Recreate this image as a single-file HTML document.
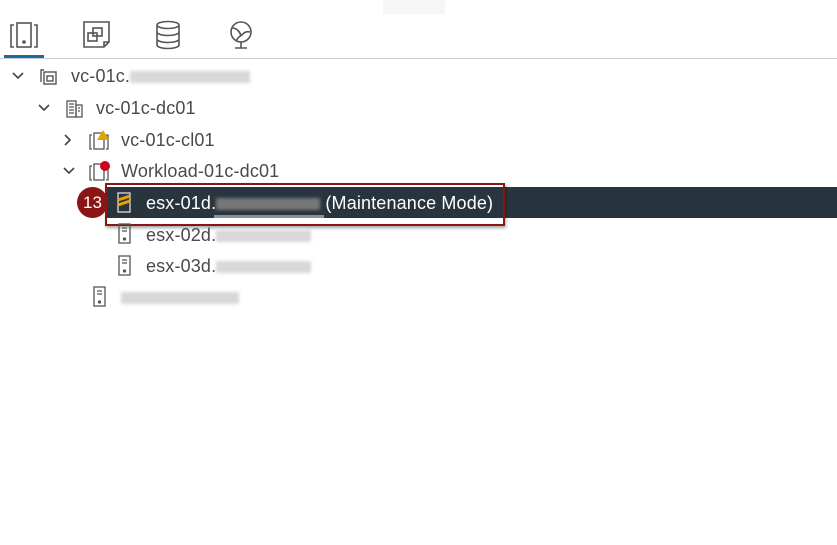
<!DOCTYPE html><html><head><style>
body{margin:0;width:837px;height:545px;background:#fff;font-family:"Liberation Sans",sans-serif;position:relative;overflow:hidden;color:#555}
.a{position:absolute}
.t{position:absolute;font-size:18px;line-height:20px;color:#4a4a4a;white-space:nowrap;letter-spacing:0.15px}
.blur{display:inline-block;height:12px;background:#d8d8d8;vertical-align:middle;filter:blur(1.5px)}
svg{position:absolute}
</style></head><body>
<div class="a" style="left:383px;top:0;width:62px;height:14px;background:#f6f6f6"></div>
<svg style="left:8px;top:20px" width="32" height="30" viewBox="0 0 32 30" fill="none" stroke="#555" stroke-width="1.6"><path d="M6 5H3v22h3M26 5h3v22h-3"/><rect x="9" y="3" width="14" height="24"/><circle cx="16" cy="22" r="1" fill="#555"/></svg>
<div class="a" style="left:4px;top:55px;width:40px;height:3px;background:#1a6b9c"></div>
<div class="a" style="left:0;top:58px;width:837px;height:1px;background:#ccc"></div>
<svg style="left:82px;top:20px" width="30" height="30" viewBox="0 0 30 30" fill="none" stroke="#555" stroke-width="1.6"><path d="M2 2h25v20l-5 5H2z M22 27v-5h5"/><rect x="6" y="13" width="9" height="8"/><rect x="11" y="8" width="9" height="8"/></svg>
<svg style="left:155px;top:20px" width="26" height="30" viewBox="0 0 26 30" fill="none" stroke="#555" stroke-width="1.6"><ellipse cx="13" cy="5" rx="11" ry="3.5"/><path d="M2 5v20c0 2 5 3.5 11 3.5s11-1.5 11-3.5V5M2 12c0 2 5 3.5 11 3.5s11-1.5 11-3.5M2 19c0 2 5 3.5 11 3.5s11-1.5 11-3.5"/></svg>
<svg style="left:227px;top:20px" width="28" height="30" viewBox="0 0 28 30" fill="none" stroke="#555" stroke-width="1.6"><circle cx="14" cy="12" r="10"/><path d="M5 8c5 0 8 4 9 8M14 16c3-4 6-5 9-4M9 21c2-3 3-5 5-5M8 28h12M14 22v6"/></svg>
<!-- chevrons -->
<svg style="left:12px;top:71px" width="12" height="10" fill="none" stroke="#444" stroke-width="1.6"><path d="M1 2l5 5 5-5"/></svg>
<svg style="left:38px;top:103px" width="12" height="10" fill="none" stroke="#444" stroke-width="1.6"><path d="M1 2l5 5 5-5"/></svg>
<svg style="left:63px;top:134px" width="10" height="12" fill="none" stroke="#444" stroke-width="1.6"><path d="M2 1l5 5-5 5"/></svg>
<svg style="left:63px;top:166px" width="12" height="10" fill="none" stroke="#444" stroke-width="1.6"><path d="M1 2l5 5 5-5"/></svg>
<svg style="left:39px;top:67px" width="20" height="20" fill="none" stroke="#555" stroke-width="1.4"><path d="M5 3H2v12"/><rect x="5" y="5" width="12" height="12"/><rect x="8" y="9" width="6" height="5"/></svg>
<div class="t" style="left:71px;top:66px">vc-01c.<span class="blur" style="width:120px"></span></div>
<svg style="left:65px;top:100px" width="20" height="18" fill="none" stroke="#555" stroke-width="1.3"><rect x="2" y="1" width="9" height="16"/><rect x="11" y="5" width="6" height="12"/><path d="M4 4h5M4 7h5M4 10h5M4 13h5M13 8h2M13 11h2"/></svg>
<div class="t" style="left:96px;top:98px">vc-01c-dc01</div>
<svg style="left:88px;top:129px" width="24" height="22" fill="none" stroke="#555" stroke-width="1.3"><path d="M4 6H2v14h2M18 6h2v14h-2"/><rect x="6" y="4" width="10" height="16"/><path d="M15 1l6 10h-12z" fill="#e8a200" stroke="none"/></svg>
<div class="t" style="left:121px;top:130px">vc-01c-cl01</div>
<svg style="left:88px;top:160px" width="24" height="22" fill="none" stroke="#555" stroke-width="1.3"><path d="M4 6H2v14h2M18 6h2v14h-2"/><rect x="6" y="4" width="10" height="16"/><circle cx="17" cy="6" r="5" fill="#d0021b" stroke="none"/></svg>
<div class="t" style="left:121px;top:161px">Workload-01c-dc01</div>
<div class="a" style="left:105px;top:187px;width:732px;height:31px;background:#29353e"></div>
<div class="a" style="left:105px;top:183px;width:396px;height:39px;border:2px solid #8b1414;box-shadow:1px 2px 3px rgba(0,0,0,.35)"></div>
<div class="a" style="left:77px;top:187px;width:31px;height:31px;border-radius:50%;background:#8b1414;color:#fff;font-size:17px;line-height:31px;text-align:center">13</div>
<svg style="left:115px;top:192px" width="18" height="22" fill="none" stroke="#ddd" stroke-width="1.3"><rect x="3" y="1" width="12" height="19"/><path d="M3 8l12-4M3 13l12-4" stroke="#e8a200" stroke-width="3"/></svg>
<div class="t" style="left:146px;top:193px;color:#fff">esx-01d.<span class="blur" style="width:104px;background:#777"></span> (Maintenance Mode)</div>
<div class="a" style="left:214px;top:215px;width:110px;height:3px;background:#8a9096"></div>
<svg style="left:117px;top:223px" width="16" height="22" fill="none" stroke="#555" stroke-width="1.3"><rect x="2" y="1" width="11" height="19"/><path d="M5 5h5M5 8h5"/><circle cx="7.5" cy="16" r="1" fill="#555"/></svg>
<div class="t" style="left:146px;top:225px">esx-02d.<span class="blur" style="width:95px"></span></div>
<svg style="left:117px;top:255px" width="16" height="22" fill="none" stroke="#555" stroke-width="1.3"><rect x="2" y="1" width="11" height="19"/><path d="M5 5h5M5 8h5"/><circle cx="7.5" cy="16" r="1" fill="#555"/></svg>
<div class="t" style="left:146px;top:256px">esx-03d.<span class="blur" style="width:95px"></span></div>
<svg style="left:92px;top:286px" width="16" height="22" fill="none" stroke="#555" stroke-width="1.3"><rect x="2" y="1" width="11" height="19"/><path d="M5 5h5M5 8h5"/><circle cx="7.5" cy="16" r="1" fill="#555"/></svg>
<div class="t" style="left:121px;top:287px"><span class="blur" style="width:118px"></span></div>
</body></html>
